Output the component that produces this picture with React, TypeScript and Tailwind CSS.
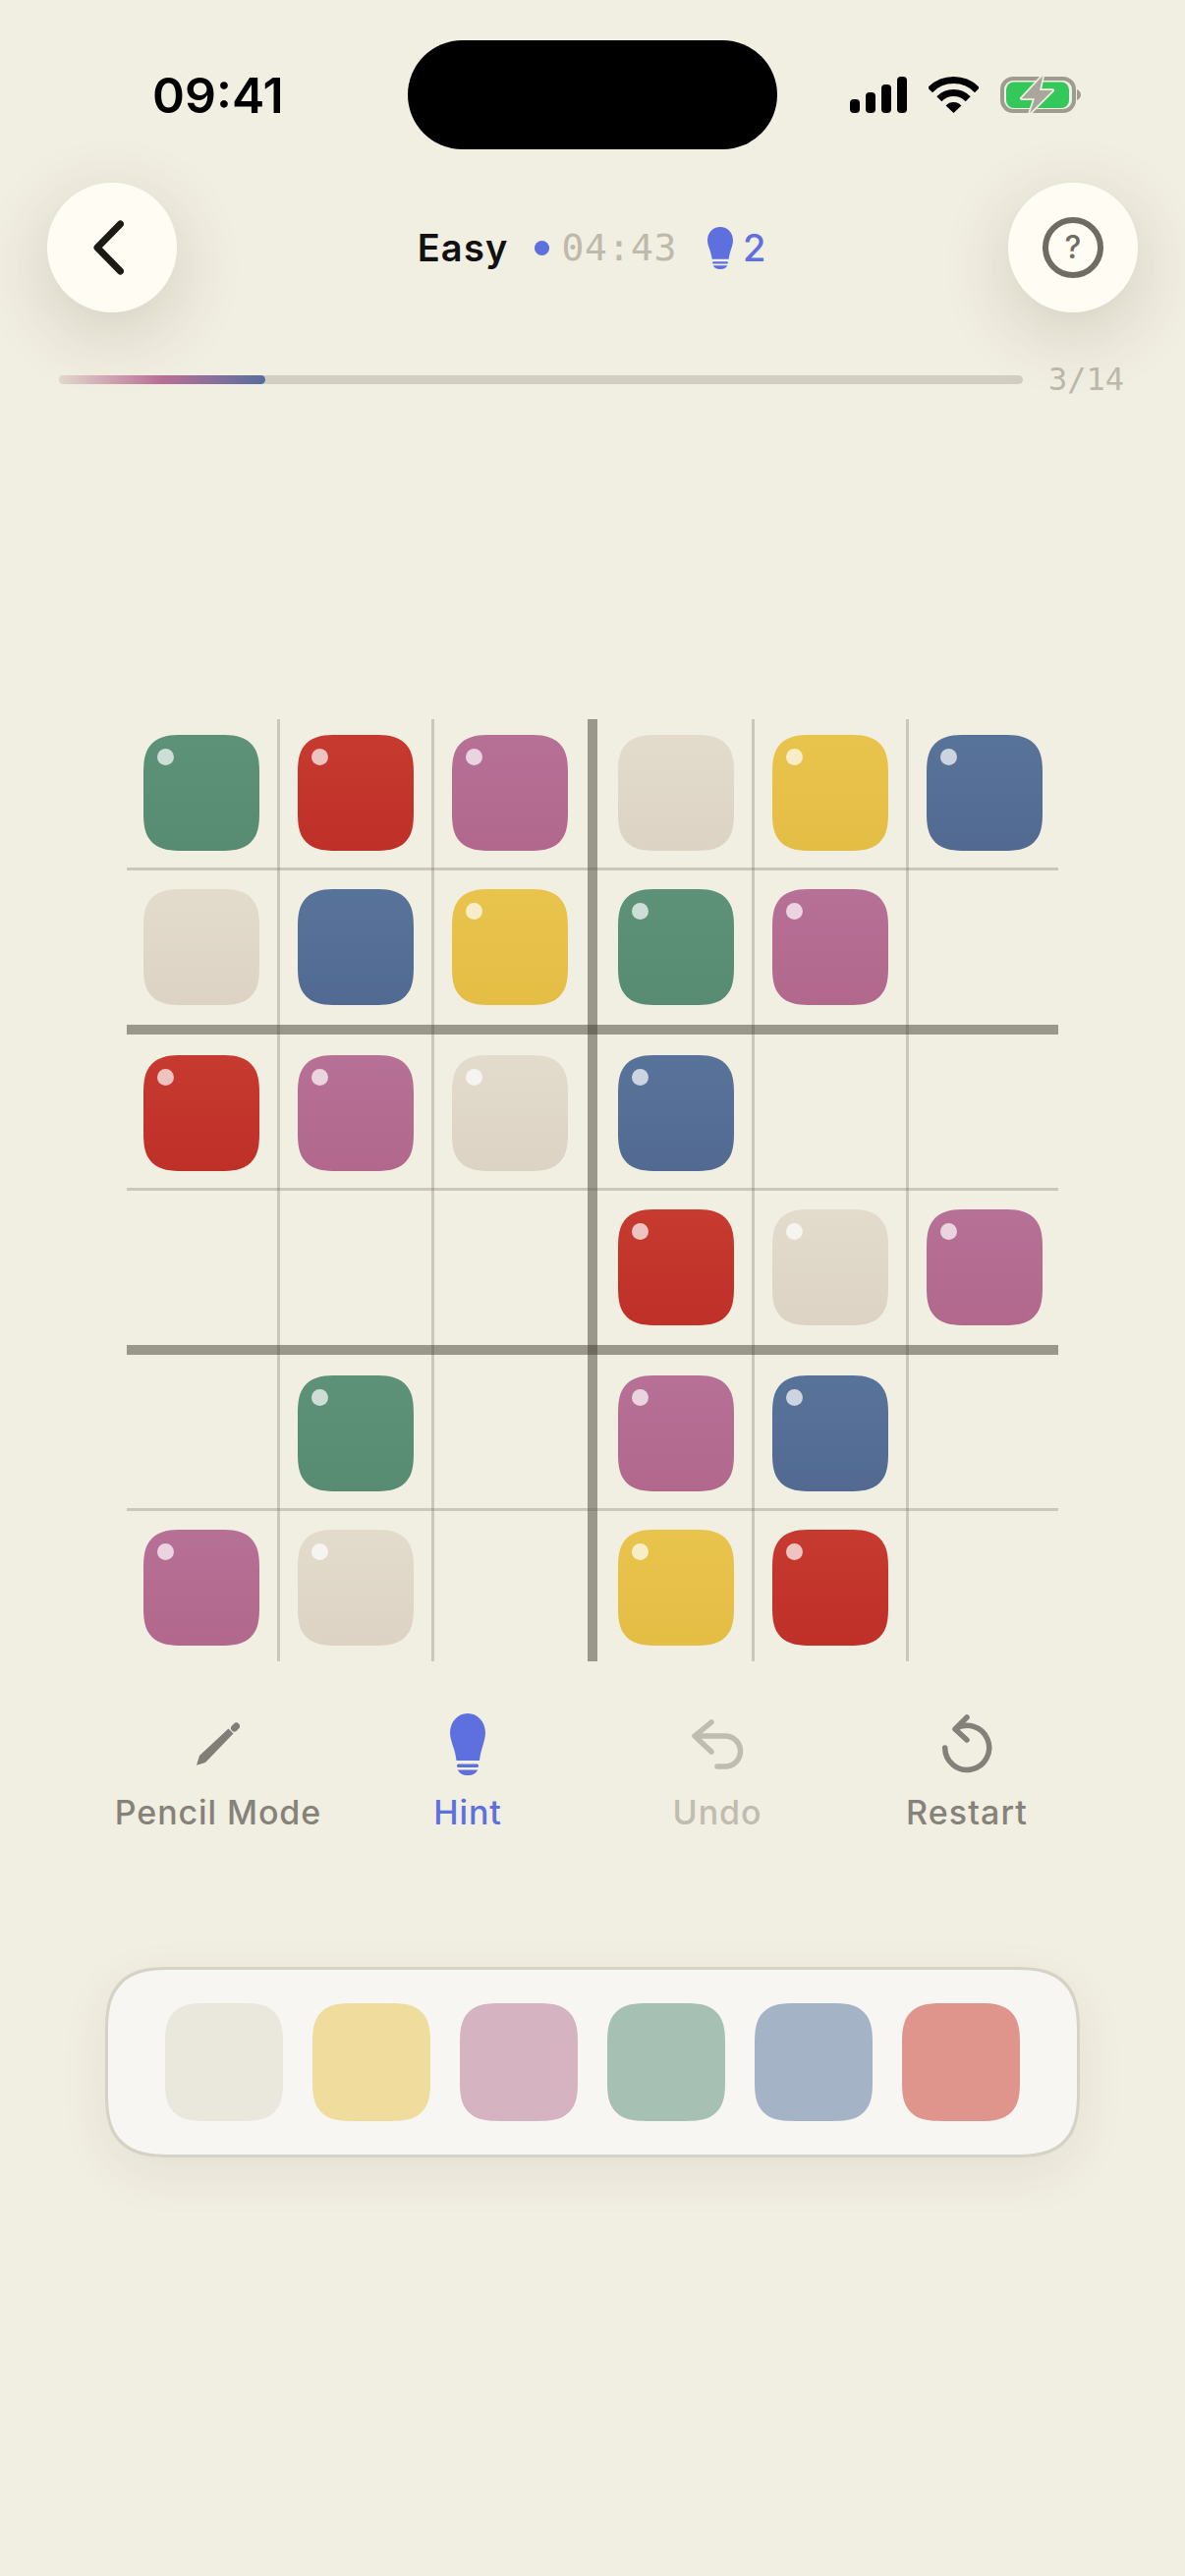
const INTER = "font-['Inter','Liberation_Sans',sans-serif]";
const MONO = "font-['DejaVu_Sans_Mono','Liberation_Mono',monospace]";

type Color = "green" | "red" | "pink" | "beige" | "yellow" | "blue";

// gradient per colour, top is slightly lighter than bottom
const tileColors: Record<Color, string> = {
  green: "bg-gradient-to-b from-[#5D9278] to-[#578B72]",
  red: "bg-gradient-to-b from-[#C63A2F] to-[#BF3028]",
  pink: "bg-gradient-to-b from-[#B77096] to-[#B1688C]",
  beige: "bg-gradient-to-b from-[#E3DBCC] to-[#DCD3C5]",
  blue: "bg-gradient-to-b from-[#587399] to-[#526A92]",
  yellow: "bg-gradient-to-b from-[#E9C44D] to-[#E4BD45]",
};

type Cell = { r: number; c: number; color: Color; dot?: boolean };

const cells: Cell[] = [
  { r: 0, c: 0, color: "green", dot: true },
  { r: 0, c: 1, color: "red", dot: true },
  { r: 0, c: 2, color: "pink", dot: true },
  { r: 0, c: 3, color: "beige" },
  { r: 0, c: 4, color: "yellow", dot: true },
  { r: 0, c: 5, color: "blue", dot: true },
  { r: 1, c: 0, color: "beige" },
  { r: 1, c: 1, color: "blue" },
  { r: 1, c: 2, color: "yellow", dot: true },
  { r: 1, c: 3, color: "green", dot: true },
  { r: 1, c: 4, color: "pink", dot: true },
  { r: 2, c: 0, color: "red", dot: true },
  { r: 2, c: 1, color: "pink", dot: true },
  { r: 2, c: 2, color: "beige", dot: true },
  { r: 2, c: 3, color: "blue", dot: true },
  { r: 3, c: 3, color: "red", dot: true },
  { r: 3, c: 4, color: "beige", dot: true },
  { r: 3, c: 5, color: "pink", dot: true },
  { r: 4, c: 1, color: "green", dot: true },
  { r: 4, c: 3, color: "pink", dot: true },
  { r: 4, c: 4, color: "blue", dot: true },
  { r: 5, c: 0, color: "pink", dot: true },
  { r: 5, c: 1, color: "beige", dot: true },
  { r: 5, c: 3, color: "yellow", dot: true },
  { r: 5, c: 4, color: "red", dot: true },
];

const rowPad = ["mt-[16px]", "mt-[19px]", "mt-[21px]", "mt-[19px]", "mt-[21px]", "mt-[19px]"];
const colPad = ["ml-[17px]", "ml-[18px]", "ml-[18px]", "ml-[21px]", "ml-[18px]", "ml-[18px]"];
const swatches = ["bg-[#EAE7DC]", "bg-[#F0DC9C]", "bg-[#D6B3C0]", "bg-[#A6C1B3]", "bg-[#A5B3C7]", "bg-[#E0958C]"];

const Bulb = ({ className }: { className: string }) => (
  <svg viewBox="0 0 36 63" preserveAspectRatio="none" className={className} fill="#5E70DE">
    <path d="M18 0C28.5 0 36 9 36 20C36 28 31.5 35 30 48H6.5C5 35 0 28 0 20C0 9 7.5 0 18 0Z" />
    <rect x="7" y="51.5" width="22" height="3.5" rx="1.5" />
    <path d="M8 57.5H28C27 61 23 63 18 63C13 63 9 61 8 57.5Z" />
  </svg>
);

const StatusIcons = () => (
  <div className="flex items-center">
    <svg width="58" height="37" viewBox="0 0 58 37" fill="#000">
      <rect x="0" y="23" width="10" height="14" rx="4" />
      <rect x="16" y="16" width="10" height="21" rx="4" />
      <rect x="32" y="8" width="10" height="29" rx="4" />
      <rect x="48" y="0" width="10" height="37" rx="4" />
    </svg>
    <svg width="51" height="37" viewBox="0 0 51 37" className="ml-[22px]">
      <path d="M1.5 13.7A33.5 33.5 0 0 1 49.5 13.7" fill="none" stroke="#000" strokeWidth="7" />
      <path d="M10.8 22.8A20.5 20.5 0 0 1 40.2 22.8" fill="none" stroke="#000" strokeWidth="7" />
      <path d="M25.5 37L17.6 29.4A11 11 0 0 1 33.4 29.4Z" fill="#000" />
    </svg>
    <svg width="82" height="39" viewBox="0 0 82 39" className="ml-[22px]">
      <rect x="2" y="3" width="73" height="33" rx="11" fill="none" stroke="#9E9C91" strokeWidth="4" />
      <rect x="6" y="6.5" width="64" height="26.5" rx="8" fill="#34C759" />
      <path d="M78 14C80.5 15 82 17 82 19.5C82 22 80.5 24 78 25Z" fill="#9E9C91" />
      <path d="M43.3 0L21.7 23.3H35L30 38.3L53.3 15H40Z" fill="#A9A79C" stroke="#F1EEE2" strokeWidth="3.5" paintOrder="stroke" strokeLinejoin="round" />
    </svg>
  </div>
);

const Board = () => {
  const vLines = [
    { cls: "col-start-2", w: "bg-[#5A5748]/25" },
    { cls: "col-start-4", w: "bg-[#5A5748]/25" },
    { cls: "col-start-6", w: "bg-[#434034]/50" },
    { cls: "col-start-8", w: "bg-[#5A5748]/25" },
    { cls: "col-start-10", w: "bg-[#5A5748]/25" },
  ];
  const hLines = [
    { cls: "row-start-2", w: "bg-[#5A5748]/25" },
    { cls: "row-start-4", w: "bg-[#434034]/50" },
    { cls: "row-start-6", w: "bg-[#5A5748]/25" },
    { cls: "row-start-8", w: "bg-[#434034]/50" },
    { cls: "row-start-10", w: "bg-[#5A5748]/25" },
  ];
  return (
    <div className="mt-[326px] ml-[129px] grid w-[948px] grid-cols-[153px_3px_154px_3px_156px_10px_157px_3px_154px_3px_152px] grid-rows-[151px_3px_157px_10px_156px_3px_157px_10px_156px_3px_153px]">
      {vLines.map((l) => (
        <div key={l.cls} className={`${l.cls} row-start-1 row-span-full ${l.w}`} />
      ))}
      {hLines.map((l) => (
        <div key={l.cls} className={`${l.cls} col-start-1 col-span-full ${l.w}`} />
      ))}
      {cells.map((cell) => (
        <div
          key={`${cell.r}-${cell.c}`}
          style={{ gridRow: cell.r * 2 + 1, gridColumn: cell.c * 2 + 1 }}
          className={`relative h-[118px] w-[118px] self-start justify-self-start rounded-[40px] [corner-shape:superellipse(1.5)] ${rowPad[cell.r]} ${colPad[cell.c]} ${tileColors[cell.color]}`}
        >
          {cell.dot && <div className="absolute left-[14px] top-[14px] h-[17px] w-[17px] rounded-full bg-white/70" />}
        </div>
      ))}
    </div>
  );
};

export default function App() {
  return (
    <div className={`flex min-h-[2622px] w-[1206px] flex-col bg-[#F1EEE2] ${INTER}`}>
      {/* status bar */}
      <div className="flex items-center pt-[41px]">
        <div className="w-[415px] pl-[155px] text-[50px] font-semibold leading-[60px] text-black">09:41</div>
        <div className="h-[111px] w-[376px] rounded-full bg-black" />
        <div className="pl-[74px]">
          <StatusIcons />
        </div>
      </div>

      {/* header */}
      <div className="mt-[34px] flex items-center justify-between px-[48px]">
        <button className="flex h-[132px] w-[132px] items-center justify-center rounded-full bg-[#FFFDF3] shadow-[0_20px_70px_rgba(90,80,50,0.2)]">
          <svg width="31" height="56" viewBox="0 0 31 56" fill="none" stroke="#1C1A14" strokeWidth="7" strokeLinecap="round" strokeLinejoin="round" className="mr-[8px]">
            <path d="M27.5 4L4 28L27.5 52" />
          </svg>
        </button>
        <div className="mr-[2px] flex items-center">
          <span className="text-[38px] font-semibold leading-[46px] tracking-[1.2px] text-[#111]">Easy</span>
          <span className="ml-[26px] h-[15px] w-[15px] rounded-full bg-[#5E70DE]" />
          <span className={`ml-[13px] text-[38px] leading-[46px] tracking-[0.6px] text-[#BDB9AB] ${MONO}`}>04:43</span>
          <Bulb className="ml-[31px] h-[43px] w-[26px]" />
          <span className="ml-[10px] text-[38px] font-medium leading-[46px] text-[#5E70DE]">2</span>
        </div>
        <button className="relative flex h-[132px] w-[132px] items-center justify-center rounded-full bg-[#FFFDF3] shadow-[0_20px_70px_rgba(90,80,50,0.2)]">
          <span className="flex h-[62px] w-[62px] items-center justify-center rounded-full border-[6px] border-[#6F6C64] text-[32px] font-medium leading-none text-[#6F6C64]">?</span>
        </button>
      </div>

      {/* progress */}
      <div className="mt-[48px] flex h-[40px] items-center pl-[60px]">
        <div className="h-[9px] w-[981px] rounded-full bg-[#D2CEC1]">
          <div className="h-[9px] w-[210px] rounded-full bg-gradient-to-r from-[#E0D8CB] via-[#B86E96] to-[#536D9E]" />
        </div>
        <span className={`ml-[26px] text-[32px] leading-[40px] text-[#BDB9AB] ${MONO}`}>3/14</span>
      </div>

      <Board />

      {/* tools */}
      <div className="mx-auto mt-[51px] grid w-[1016px] grid-cols-4">
        <div className="flex flex-col items-center">
          <div className="flex h-[66px] items-center">
            <svg width="44" height="44" viewBox="0 0 44 44" fill="#807E76">
              <path d="M0 43.7L3 34L32.5 6.5L37.5 11.5L9 41Z" />
              <path d="M38.5 6L40.5 4" stroke="#807E76" strokeWidth="7" strokeLinecap="round" />
            </svg>
          </div>
          <span className="mt-[17px] text-[34px] font-medium leading-[40px] tracking-[0.9px] text-[#85827A]">Pencil Mode</span>
        </div>
        <div className="flex flex-col items-center">
          <div className="flex h-[66px] items-center">
            <Bulb className="h-[63px] w-[36px]" />
          </div>
          <span className="mt-[17px] text-[34px] font-medium leading-[40px] tracking-[0.9px] text-[#5E70DE]">Hint</span>
        </div>
        <div className="flex flex-col items-center">
          <div className="flex h-[66px] items-center">
            <svg width="60" height="55" viewBox="0 0 60 55" fill="none" stroke="#BFBCB0" strokeWidth="5.5" strokeLinecap="round" strokeLinejoin="round">
              <path d="M24 5L7 19L24 35M7 19H38A15.5 15.5 0 0 1 38 50H30" />
            </svg>
          </div>
          <span className="mt-[17px] text-[34px] font-medium leading-[40px] tracking-[0.9px] text-[#BFBCB0]">Undo</span>
        </div>
        <div className="flex flex-col items-center">
          <div className="flex h-[66px] items-center">
            <svg width="60" height="62" viewBox="0 0 60 62" fill="none" stroke="#84817A" strokeWidth="5.5" strokeLinecap="round" strokeLinejoin="round" className="mr-[1px]">
              <path d="M7.7 35A22.5 22.5 0 1 0 18 16M30 4L18 16L30 27" />
            </svg>
          </div>
          <span className="mt-[17px] text-[34px] font-medium leading-[40px] tracking-[1.1px] text-[#85827A]">Restart</span>
        </div>
      </div>

      {/* palette */}
      <div className="mx-auto mt-[137px] flex h-[194px] w-[992px] items-center justify-center gap-[30px] rounded-[68px] border-[3px] border-[#D5D2C6] bg-[#F7F6F2] shadow-[0_16px_50px_rgba(90,80,50,0.08)] [corner-shape:superellipse(1.5)]">
        {swatches.map((s) => (
          <div key={s} className={`h-[120px] w-[120px] rounded-[41px] [corner-shape:superellipse(1.5)] ${s}`} />
        ))}
      </div>
    </div>
  );
}
